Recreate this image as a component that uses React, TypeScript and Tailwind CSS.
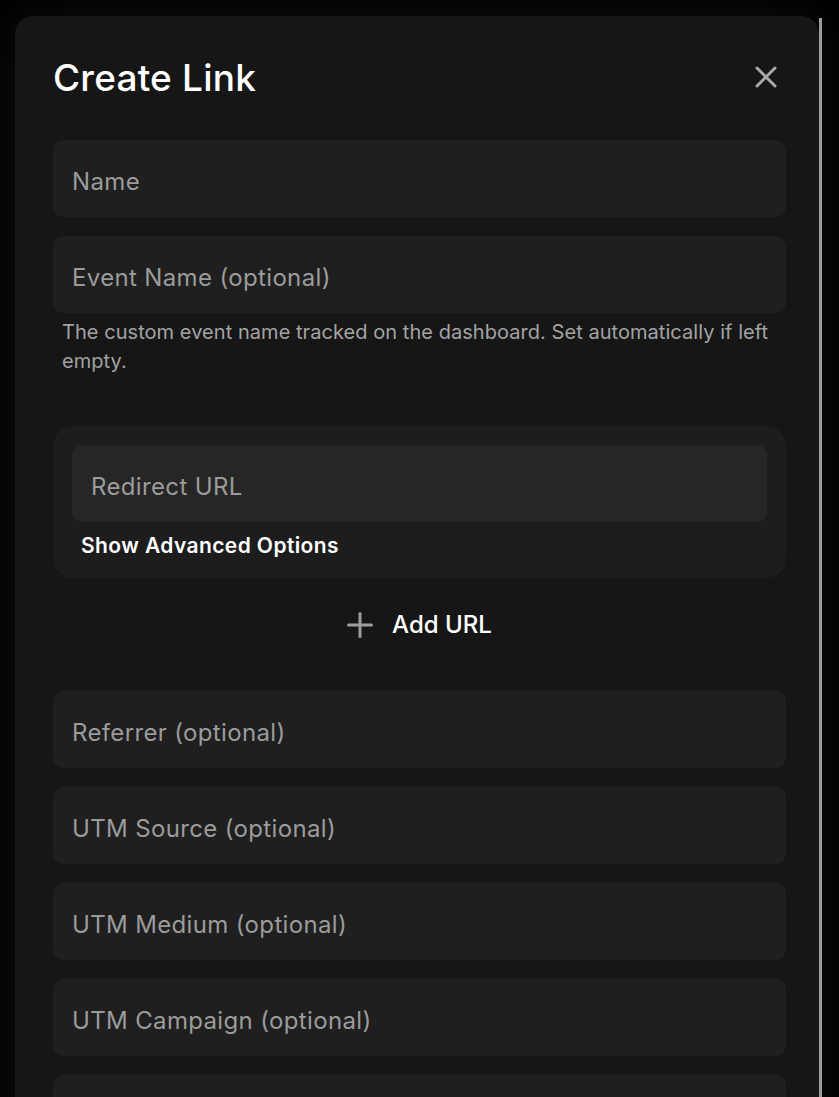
import React from 'react';

const font = { fontFamily: 'Inter, "Noto Sans", sans-serif' };

const Field: React.FC<{ placeholder: string; inner?: boolean }> = ({ placeholder, inner }) => (
  <input
    type="text"
    placeholder={placeholder}
    className={`h-[77px] w-full rounded-[10px] px-[19px] pt-[6px] text-[24px] tracking-[0.35px] text-white outline-none placeholder:text-[#9b9b9b] ${
      inner ? 'bg-[#262626]' : 'bg-[#1f1f1f]'
    }`}
    style={font}
  />
);

export default function App() {
  const optional = ['Referrer (optional)', 'UTM Source (optional)', 'UTM Medium (optional)', 'UTM Campaign (optional)', 'UTM Term (optional)'];

  return (
    <div className="h-[1097px] w-[839px] overflow-hidden bg-black" style={font}>
      <div className="flex pl-[15px] pt-[16px]">
        {/* Modal */}
        <div className="w-[804px] rounded-[18px] bg-[#161616] pl-[38px] pr-[33px] pt-[41px] pb-10 shadow-[0_0_40px_rgba(255,255,255,0.06)]">
          <div className="flex h-[40px] items-center justify-between">
            <h2 className="text-[37px] font-medium leading-none tracking-[0.2px] text-white">Create Link</h2>
            <button className="mr-[8px] flex h-[24px] w-[24px] items-center justify-center">
              <svg width="22" height="22" viewBox="0 0 22 22" fill="none" stroke="#a9a9a9" strokeWidth="3" strokeLinecap="round">
                <path d="M2 2 20 20" />
                <path d="M20 2 2 20" />
              </svg>
            </button>
          </div>

          <div className="mt-[43px] flex flex-col gap-[19px]">
            <Field placeholder="Name" />
            <div>
              <Field placeholder="Event Name (optional)" />
              <p className="mt-[5px] pl-[9px] text-[20px] leading-[29px] tracking-[0.05px] text-[#a3a3a3]">
                The custom event name tracked on the dashboard. Set automatically if left empty.
              </p>
            </div>
          </div>

          {/* Redirect URL group */}
          <div className="mt-[50px] rounded-[20px] bg-[#1d1d1d] px-[19px] pt-[19px] pb-[18px]">
            <Field placeholder="Redirect URL" inner />
            <button className="mt-[10px] pl-[9px] text-[21px] font-semibold leading-[28px] tracking-[0.4px] text-white">
              Show Advanced Options
            </button>
          </div>

          <div className="mt-[23px] flex h-[48px] items-center justify-center gap-[19px]">
            <svg width="26" height="26" viewBox="0 0 26 26" fill="none" stroke="#9d9d9d" strokeWidth="3" strokeLinecap="round">
              <path d="M13 1.5v23" />
              <path d="M1.5 13h23" />
            </svg>
            <span className="text-[24px] font-medium text-white">Add URL</span>
          </div>

          <div className="mt-[42px] flex flex-col gap-[19px]">
            {optional.map((p) => (
              <Field key={p} placeholder={p} />
            ))}
          </div>
        </div>
        {/* Scrollbar */}
        <div className="mt-[2px] h-[1100px] w-[3px] bg-[#9c9c9c]" />
      </div>
    </div>
  );
}
